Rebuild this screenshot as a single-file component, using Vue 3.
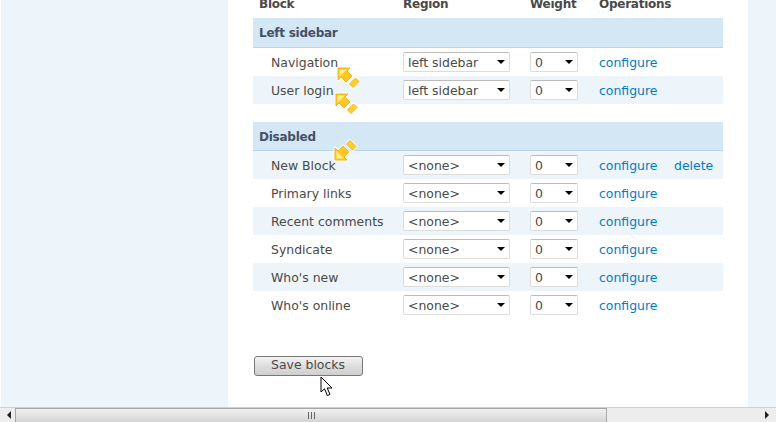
<template>
  <div class="page">
    <div class="viewport">
      <div class="sheet">
        <div class="blocks">
          <div class="row head-row">
            <span>Block</span>
            <span>Region</span>
            <span>Weight</span>
            <span>Operations</span>
          </div>

          <template v-for="group in groups" :key="group.title">
            <div class="group-title">{{ group.title }}</div>
            <div
              v-for="(item, i) in group.items"
              :key="item.name"
              class="row item-row"
              :class="{ alt: i % 2 === group.altOn }"
            >
              <span class="item-name">{{ item.name }}</span>
              <div class="fake-select region">
                <span>{{ group.region }}</span>
                <i class="caret"></i>
              </div>
              <div class="fake-select weight">
                <span>0</span>
                <i class="caret"></i>
              </div>
              <div class="ops">
                <a href="#" class="op-configure">configure</a>
                <a v-if="item.del" href="#">delete</a>
              </div>
            </div>
          </template>
        </div>

        <button class="save" type="button">Save blocks</button>

        <svg v-for="m in markers" :key="m.id" class="marker" :style="m.style" width="26" height="26" viewBox="0 0 26 26">
          <path d="M2 2 L14 2 L11 5 L16 10 L10 16 L5 11 L2 14 Z" fill="none" stroke="#fff" stroke-opacity="0.75" stroke-width="3" stroke-linejoin="round" />
          <path d="M19.5 12 L23 15.5 L17 21.5 L13.5 18 Z" fill="none" stroke="#fff" stroke-opacity="0.75" stroke-width="3" stroke-linejoin="round" />
          <path d="M2 2 L14 2 L11 5 L16 10 L10 16 L5 11 L2 14 Z" fill="#fdc824" stroke="#f1b61a" stroke-width="1" stroke-linejoin="round" />
          <path d="M3.5 3.5 L11 3.5 L3.5 11 Z" fill="#ffeb8c" />
          <path d="M19.5 12 L23 15.5 L17 21.5 L13.5 18 Z" fill="#fdcf30" stroke="#f1b61a" stroke-width="1" stroke-linejoin="round" />
        </svg>

        <svg class="pointer" width="14" height="22" viewBox="0 0 14 22">
          <path d="M1 1 L1 16 L4.5 12.8 L7.4 19.6 L10 18.4 L7.2 12 L12 12 Z" fill="#fff" stroke="#000" stroke-width="1" stroke-linejoin="round" />
        </svg>
      </div>
    </div>

    <div class="hscroll">
      <i class="arrow left"></i>
      <div class="thumb"><span class="grip"></span></div>
      <i class="arrow right"></i>
    </div>
  </div>
</template>

<script setup>
const groups = [
  {
    title: 'Left sidebar',
    region: 'left sidebar',
    altOn: 1,
    items: [{ name: 'Navigation' }, { name: 'User login' }]
  },
  {
    title: 'Disabled',
    region: '<none>',
    altOn: 0,
    items: [
      { name: 'New Block', del: true },
      { name: 'Primary links' },
      { name: 'Recent comments' },
      { name: 'Syndicate' },
      { name: "Who's new" },
      { name: "Who's online" }
    ]
  }
]

const markers = [
  { id: 1, style: { left: '108px', top: '66px' } },
  { id: 2, style: { left: '106px', top: '92px' } },
  { id: 3, style: { left: '105px', top: '136px', transform: 'scaleY(-1)' } }
]
</script>

<style>
html,
body {
  margin: 0;
  overflow: hidden;
}
</style>

<style scoped>
.page {
  width: 776px;
  height: 422px;
  display: flex;
  flex-direction: column;
  font-family: "DejaVu Sans", Verdana, sans-serif;
  font-size: 12.45px;
  color: #494949;
  background: #fff;
}

.viewport {
  flex: 1;
  min-height: 0;
  overflow: hidden;
  box-sizing: border-box;
  padding: 0 27px 0 1px;
  background: linear-gradient(#fff, #fff) 0 0 / 1px 100% no-repeat, #edf5fa;
}

.sheet {
  position: relative;
  margin-left: 227px;
  width: 520px;
  height: 100%;
  box-sizing: border-box;
  padding: 0 25px;
  background: #fff;
}

.blocks {
  width: 470px;
}

.row {
  display: grid;
  grid-template-columns: 150px 127px 69px 1fr;
  align-items: center;
}

.head-row {
  height: 18px;
  align-items: start;
  overflow: hidden;
  font-size: 12px;
  font-weight: 700;
  letter-spacing: -0.25px;
  line-height: 10px;
  color: #494949;
}

.head-row span {
  display: block;
  margin-top: -1px;
}

.head-row span:first-child {
  padding-left: 6px;
}

.group-title {
  box-sizing: border-box;
  height: 30px;
  line-height: 31px;
  padding-left: 6px;
  font-size: 12px;
  font-weight: 700;
  letter-spacing: -0.25px;
  color: #455067;
  background: #d3e7f4;
  border-bottom: 1px solid #b8d6ec;
}

.item-row + .group-title {
  height: 29px;
  line-height: 30px;
  margin-top: 18px;
}

.item-row {
  height: 28px;
}

.item-row.alt {
  background: #edf5fa;
}

.item-name {
  padding-left: 18px;
}

.fake-select {
  box-sizing: border-box;
  height: 20px;
  display: flex;
  align-items: center;
  justify-content: space-between;
  padding: 0 4px 0 4px;
  background: #fff;
  border: 1px solid #dcdcdc;
  border-top-color: #bcbcbc;
  border-radius: 2px;
}

.region {
  width: 107px;
}

.weight {
  width: 48px;
}

.caret {
  width: 0;
  height: 0;
  border-left: 4px solid transparent;
  border-right: 4px solid transparent;
  border-top: 4px solid #000;
}

.ops {
  display: flex;
}

.ops a {
  color: #027ac6;
  text-decoration: none;
}

.op-configure {
  width: 75px;
}

.save {
  display: block;
  box-sizing: border-box;
  width: 109px;
  height: 20px;
  margin: 37px 0 0 1px;
  padding: 0 1px 3px 0;
  font: inherit;
  color: #494949;
  border: 1px solid #777;
  border-radius: 3px;
  background: linear-gradient(#f4f4f4, #dcdcdc 55%, #cfcfcf);
}

.marker {
  position: absolute;
}

.pointer {
  position: absolute;
  left: 92px;
  top: 376px;
}

.hscroll {
  flex: none;
  height: 15px;
  box-sizing: border-box;
  display: flex;
  align-items: stretch;
  padding: 0 3px;
  background: #ededed;
  border-top: 1px solid #d0d0d0;
}

.arrow {
  flex: none;
  width: 12px;
  align-self: center;
  display: flex;
  justify-content: center;
}

.arrow::before {
  content: "";
  border-top: 4px solid transparent;
  border-bottom: 4px solid transparent;
}

.arrow.left::before {
  border-right: 4px solid #222;
}

.arrow.right {
  margin-left: auto;
}

.arrow.right::before {
  border-left: 4px solid #222;
}

.thumb {
  width: 592px;
  box-sizing: border-box;
  display: flex;
  align-items: center;
  justify-content: center;
  border: 1px solid #a6a6a6;
  border-bottom: none;
  background: linear-gradient(#f2f2f2, #d4d4d4);
}

.grip {
  width: 7px;
  height: 7px;
  background: repeating-linear-gradient(90deg, #666 0 1px, transparent 1px 3px);
}
</style>
